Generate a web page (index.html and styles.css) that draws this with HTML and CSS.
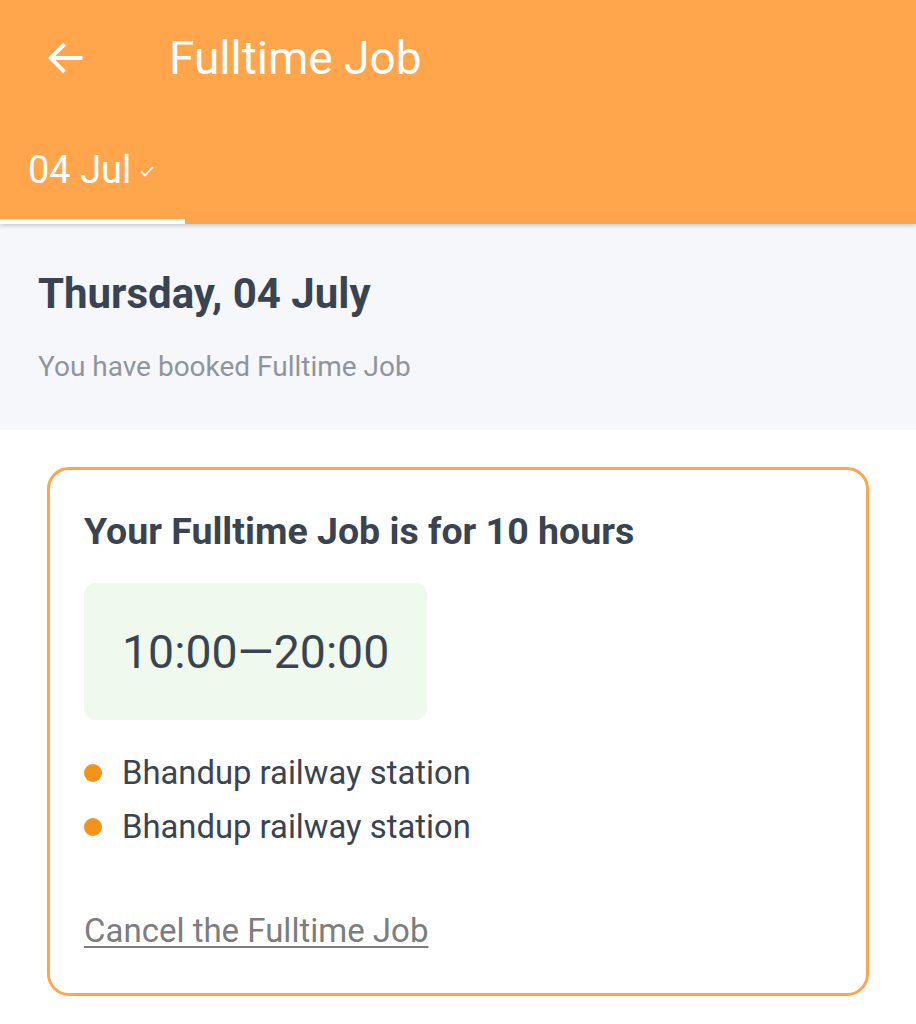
FILE: index.html
```html
<!DOCTYPE html>
<html>
<head>
<meta charset="utf-8">
<link rel="stylesheet" href="styles.css">
</head>
<body>
<header class="appbar">
  <div class="toolbar">
    <svg class="back" width="44" height="44" viewBox="0 0 24 24"><path d="M20.5 12H4.5M11 5.2l-6.8 6.8 6.8 6.8" fill="none" stroke="#fff" stroke-width="2.1" stroke-linecap="square"/></svg>
    <h1 class="title">Fulltime Job</h1>
  </div>
  <div class="tabs">
    <div class="tab active">
      <span class="tab-label">04 Jul</span>
      <svg class="check" width="16" height="12" viewBox="0 0 16 12"><path d="M2 6.5l4 4L14 2" fill="none" stroke="#fff" stroke-width="1.8"/></svg>
    </div>
  </div>
</header>
<section class="summary">
  <h2 class="date">Thursday, 04 July</h2>
  <p class="booked">You have booked Fulltime Job</p>
</section>
<main class="content">
  <div class="card">
    <h3 class="card-title">Your Fulltime Job is for 10 hours</h3>
    <div class="time-box">10:00—20:00</div>
    <ul class="places">
      <li>Bhandup railway station</li>
      <li>Bhandup railway station</li>
    </ul>
    <a class="cancel" href="#">Cancel the Fulltime Job</a>
  </div>
</main>
</body>
</html>
```
FILE: styles.css
```css
* { box-sizing: border-box; }
html, body { margin: 0; padding: 0; }
body {
  font-family: Roboto, "Noto Sans", sans-serif;
  background: #ffffff;
  color: #3a4451;
  width: 916px;
}
.appbar {
  background: #ffa64d;
  height: 224px;
  display: flex;
  flex-direction: column;
  box-shadow: 0 2px 4px rgba(0,0,0,0.18);
  position: relative;
  z-index: 1;
}
.toolbar {
  height: 116px;
  display: flex;
  align-items: center;
  padding-left: 43px;
}
.back { display: block; margin-right: 82px; }
.title {
  margin: 0;
  font-size: 46px;
  font-weight: 400;
  color: #ffffff;
  line-height: 1;
}
.tabs {
  flex: 1;
  display: flex;
}
.tab {
  width: 185px;
  display: flex;
  align-items: center;
  padding-left: 28px;
  padding-top: 4px;
  border-bottom: 5px solid #ffffff;
  color: #fff;
}
.tab-label { font-size: 38px; line-height: 1; }
.check { margin-left: 8px; margin-top: 2px; }
.summary {
  background: #f6f7fb;
  padding: 45px 38px 48px;
  height: 206px;
}
.date {
  margin: 0;
  font-size: 42px;
  font-weight: 700;
  line-height: 50px;
  color: #3a4451;
}
.booked {
  margin: 32px 0 0;
  font-size: 28px;
  line-height: 32px;
  color: #8f959c;
}
.content { padding: 37px 47px 0; }
.card {
  border: 3.5px solid #ffa64d;
  border-radius: 22px;
  padding: 41px 34px 40px;
  height: 529px;
}
.card-title {
  margin: 0;
  font-size: 37.5px;
  font-weight: 700;
  line-height: 40px;
}
.time-box {
  margin-top: 32px;
  width: 343px;
  height: 137px;
  background: #eff9ee;
  border-radius: 12px;
  display: flex;
  align-items: center;
  padding-left: 38px;
  font-size: 46.4px;
}
.places {
  list-style: none;
  margin: 26px 0 0;
  padding: 0;
}
.places li {
  display: flex;
  align-items: center;
  font-size: 32.8px;
  line-height: 54px;
}
.places li::before {
  content: "";
  width: 18px;
  height: 18px;
  border-radius: 50%;
  background: #f39319;
  margin-right: 20px;
}
.cancel {
  display: inline-block;
  margin-top: 57px;
  font-size: 33px;
  line-height: 40px;
  color: #7d7d7d;
  text-decoration: underline;
  text-underline-offset: 4px;
  text-decoration-thickness: 2px;
}
```
